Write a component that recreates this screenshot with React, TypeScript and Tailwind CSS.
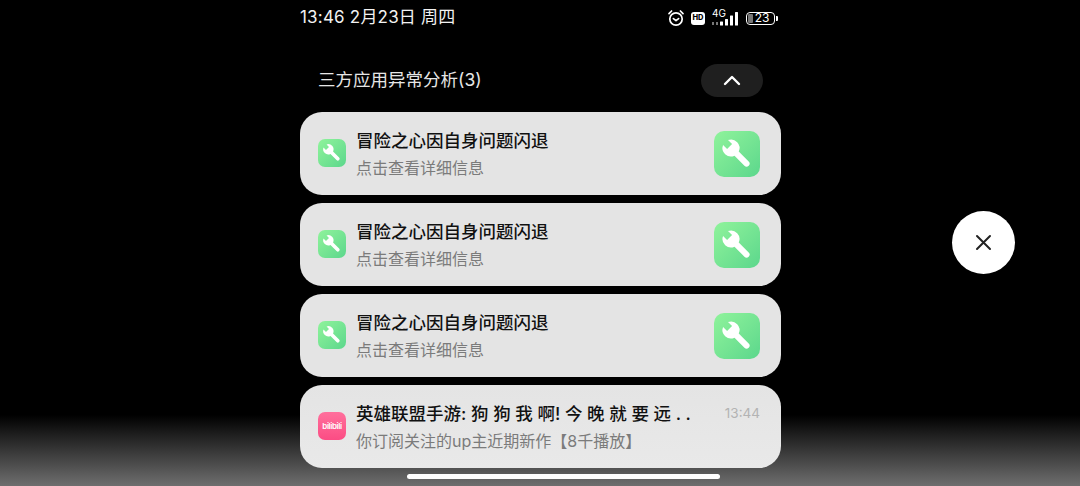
const font = "font-['Inter','Noto_Sans_CJK_SC',sans-serif]";

function Wrench({ size }: { size: number }) {
  return (
    <svg width={size} height={size} viewBox="0 0 46 46">
      <path
        fill="#fff"
        transform="translate(17 17) rotate(45)"
        d="M-7.75 -3.5 L-2 -3.5 L-2 3.5 L-7.75 3.5 A8.5 8.5 0 0 0 7.95 3 L22 3 A3 3 0 0 0 22 -3 L7.95 -3 A8.5 8.5 0 0 0 -7.75 -3.5 Z"
      />
    </svg>
  );
}

function ToolCard() {
  return (
    <div className="flex h-[83px] items-center rounded-[22px] bg-[#e4e4e4] pl-[18px] pr-[21px]">
      <div className="mb-[2px] flex h-[28px] w-[28px] shrink-0 items-center justify-center rounded-[7px] bg-gradient-to-br from-[#8ff39b] to-[#5bd78c]">
        <Wrench size={28} />
      </div>
      <div className="ml-[10px] flex min-w-0 flex-1 flex-col">
        <div className="text-[17.5px] leading-[28px] font-medium text-[#111]">冒险之心因自身问题闪退</div>
        <div className="text-[16px] leading-[26px] text-[#7b7b7b]">点击查看详细信息</div>
      </div>
      <div className="flex h-[46px] w-[46px] shrink-0 items-center justify-center rounded-[10px] bg-gradient-to-br from-[#8ff39b] to-[#5bd78c]">
        <Wrench size={46} />
      </div>
    </div>
  );
}

function BiliCard() {
  return (
    <div className="flex h-[83px] items-center rounded-[22px] bg-gradient-to-b from-[#e4e4e4] to-[#e9e9e9] pl-[18px] pr-[21px]">
      <div className="mb-[2px] flex h-[28px] w-[28px] shrink-0 items-center justify-center overflow-hidden rounded-[7px] bg-gradient-to-b from-[#ff6f9c] to-[#fb4c84] text-[8px] leading-none font-semibold tracking-[-0.4px] text-white">
        bilibili
      </div>
      <div className="ml-[10px] flex min-w-0 flex-1 flex-col">
        <div className="flex items-center justify-between">
          <span className="text-[17.5px] leading-[28px] font-medium whitespace-nowrap text-[#111]">
            英雄联盟手游: 狗 狗 我 啊! 今 晚 就 要 远 . .
          </span>
          <span className="text-[13.5px] text-[#b3b3b3]">13:44</span>
        </div>
        <div className="text-[16px] leading-[26px] text-[#7b7b7b]">你订阅关注的up主近期新作【8千播放】</div>
      </div>
    </div>
  );
}

function StatusIcons() {
  return (
    <div className="flex items-center">
      <svg width="18" height="18" viewBox="0 0 18 18" fill="none" stroke="#fff" strokeWidth="1.7" strokeLinecap="round" strokeLinejoin="round">
        <circle cx="9" cy="10" r="6.2" />
        <path d="M6.4 9.6 9 11.6l2.6-2M2 4.6 4.6 2M16 4.6 13.4 2" />
      </svg>
      <div className="ml-[6px] flex h-[13px] w-[14px] items-center justify-center rounded-[3px] bg-white text-[7.5px] leading-none font-extrabold text-black">HD</div>
      <div className="relative ml-[6px] h-[18px] w-[30px]">
        <span className="absolute top-[-2px] left-[1px] text-[10px] leading-[12px] text-white">4G</span>
        <svg className="absolute top-0 left-0" width="30" height="18" viewBox="0 0 30 18" fill="#fff">
          <rect x="1" y="13" width="2" height="3" fill="#777" />
          <rect x="5" y="13" width="2" height="3" fill="#777" />
          <rect x="9" y="12.5" width="3" height="4" rx="0.5" />
          <rect x="14" y="10" width="3" height="6.5" rx="0.5" />
          <rect x="19" y="6.5" width="3" height="10" rx="0.5" />
          <rect x="24" y="3" width="3" height="13.5" rx="0.5" />
        </svg>
      </div>
      <div className="relative ml-[5px] flex h-[13px] w-[29px] items-center justify-center rounded-[4px] border border-white text-[12px] leading-none text-white">
        <span className="absolute top-[1px] bottom-[1px] left-[1px] w-[5px] rounded-[1px] bg-[#777]" />
        <span className="relative ml-[3px]">23</span>
      </div>
      <div className="ml-[1px] h-[5px] w-[2px] rounded-r-[1px] bg-white" />
    </div>
  );
}

export default function App() {
  return (
    <div className={`${font} relative h-[486px] w-[1080px] overflow-hidden bg-[linear-gradient(to_bottom,#000_0,#000_415px,#6e6e6e_486px)]`}>
      <div className="ml-[300px] flex w-[481px] flex-col">
        <div className="flex h-[36px] items-center justify-between pr-[3px]">
          <span className="text-[17px] tracking-[0.2px] text-[#f2f2f2]">13:46 2月23日 周四</span>
          <StatusIcons />
        </div>
        <div className="mt-[12px] flex h-[64px] items-center justify-between pl-[18px] pr-[18px]">
          <span className="text-[17.5px] text-[#e6e6e6]">三方应用异常分析(3)</span>
          <div className="flex h-[33px] w-[62px] items-center justify-center rounded-full bg-[#1f1f1f]">
            <svg width="18" height="11" viewBox="0 0 18 11" fill="none" stroke="#fff" strokeWidth="2.4" strokeLinecap="round" strokeLinejoin="round">
              <path d="M2 9l7-7 7 7" />
            </svg>
          </div>
        </div>
        <div className="flex flex-col gap-[8px]">
          <ToolCard />
          <ToolCard />
          <ToolCard />
          <BiliCard />
        </div>
      </div>
      <div className="absolute top-[211px] left-[952px] flex h-[63px] w-[63px] items-center justify-center rounded-full bg-white">
        <svg width="17" height="17" viewBox="0 0 17 17" fill="none" stroke="#222" strokeWidth="2" strokeLinecap="round">
          <path d="M2 2l13 13M15 2 2 15" />
        </svg>
      </div>
      <div className="absolute top-[474px] left-[407px] h-[5px] w-[313px] rounded-full bg-white" />
    </div>
  );
}
